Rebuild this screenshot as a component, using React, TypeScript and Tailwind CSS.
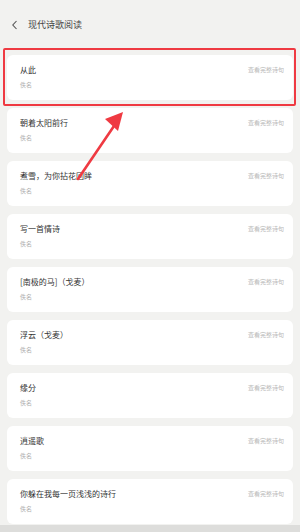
const poems = [
  "从此",
  "朝着太阳前行",
  "煮雪，为你拈花回眸",
  "写一首情诗",
  "[南极的马]（戈麦）",
  "浮云（戈麦）",
  "缘分",
  "逍遥歌",
  "你躲在我每一页浅浅的诗行",
];

const font = { fontFamily: '"Noto Sans CJK SC", "Noto Sans", sans-serif' };

function PoemCard({ title }: { title: string }) {
  return (
    <div className="h-[45px] rounded-[6px] bg-white pl-[13px] pr-[9px] pt-[9px]">
      <div className="flex items-center justify-between">
        <span className="text-[8px] leading-[12px] text-[#333333]">{title}</span>
        <span className="text-[6px] leading-[12px] text-[#b8b8b8]">查看完整诗句</span>
      </div>
      <div className="mt-[5px] text-[6px] leading-[8px] text-[#b0b0b0]">佚名</div>
    </div>
  );
}

export default function App() {
  return (
    <div className="relative h-[532px] w-[300px] overflow-hidden bg-[#f2f2f0]" style={font}>
      {/* Header */}
      <div className="flex h-[48px] items-center pl-[11px] pt-[1px]">
        <svg width="8" height="10" viewBox="0 0 8 10" className="mr-[9px]">
          <path d="M5.5 1 L1.8 5 L5.5 9" fill="none" stroke="#555" strokeWidth="1.1" />
        </svg>
        <span className="text-[9px] leading-[12px] text-[#444]">现代诗歌阅读</span>
      </div>

      {/* List */}
      <div className="flex flex-col gap-[8px] px-[7px] pt-[7px]">
        {poems.map((p) => (
          <PoemCard key={p} title={p} />
        ))}
      </div>

      {/* Annotation: red highlight box */}
      <div className="pointer-events-none absolute left-[3px] top-[48px] h-[58px] w-[293px] rounded-[2px] border-2 border-[#ef3a42]" />

      {/* Annotation: arrow */}
      <svg className="pointer-events-none absolute left-0 top-0" width="300" height="532" viewBox="0 0 300 532">
        <line x1="78" y1="179" x2="114" y2="126" stroke="#ef3a42" strokeWidth="2.6" strokeLinecap="round" />
        <polygon points="123,112 105,119 118,131" fill="#ef3a42" />
      </svg>

      {/* Bottom strip */}
      <div className="absolute bottom-0 left-0 h-[7px] w-full bg-[#dddddb]" />
    </div>
  );
}
